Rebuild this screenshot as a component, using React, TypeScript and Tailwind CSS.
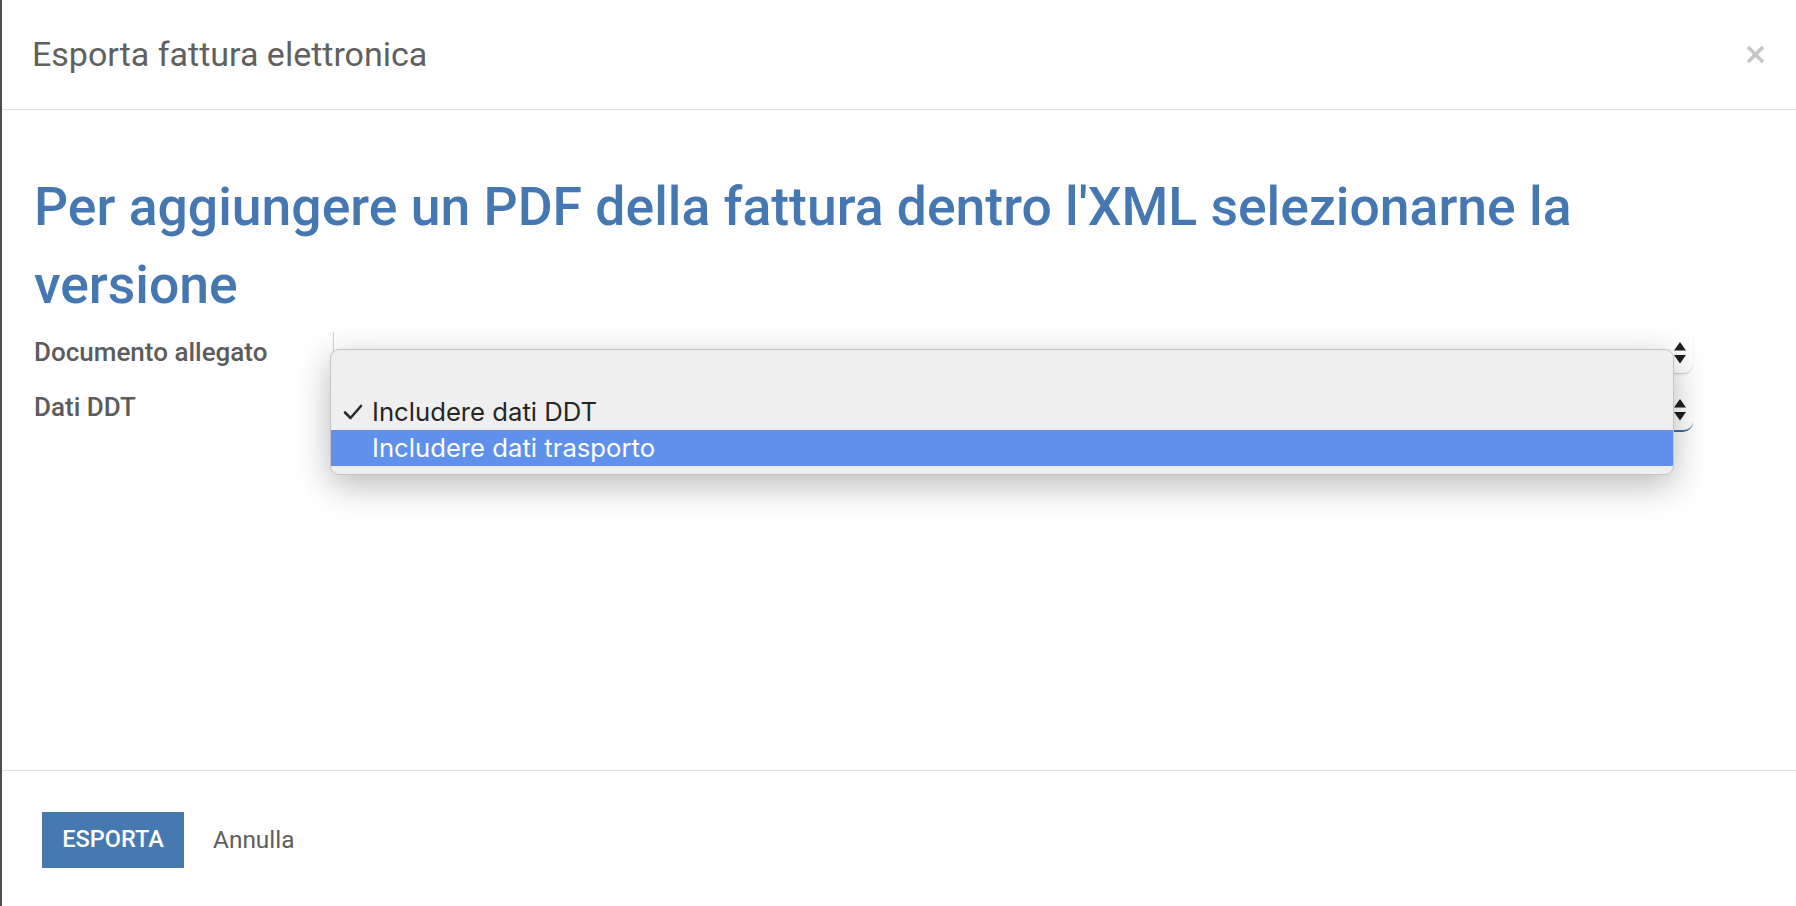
import React from 'react';

const Arrows: React.FC = () => (
  <svg width="16" height="24" viewBox="0 0 16 24" className="shrink-0">
    <path d="M8 1 L14 9.5 L2 9.5 Z" fill="#1f1f1f" />
    <path d="M8 22.5 L14 14 L2 14 Z" fill="#1f1f1f" />
  </svg>
);

export default function App() {
  return (
    <div className="flex h-[906px] w-full bg-white font-['Roboto',sans-serif]">
      {/* page behind the modal */}
      <div className="w-[2px] shrink-0 bg-[#4b4f55]" />

      <div className="flex flex-1 flex-col">
        {/* Header */}
        <div className="flex h-[110px] shrink-0 items-center justify-between border-b border-[#e3e3e3] pl-[30px] pr-[30px]">
          <h4 className="pb-[2px] text-[34px] leading-none text-[#606060]">Esporta fattura elettronica</h4>
          <button aria-label="Close" className="flex h-[22px] w-[22px] items-center justify-center">
            <svg width="19" height="19" viewBox="0 0 19 19">
              <path d="M2 2 L17 17 M17 2 L2 17" stroke="#c6c6c6" strokeWidth="3.6" strokeLinecap="butt" />
            </svg>
          </button>
        </div>

        {/* Body */}
        <div className="relative flex-1 px-[32px] pt-[58px]">
          <h2 className="text-[53.5px] font-medium leading-[78px] text-[#4577b2]">
            Per aggiungere un PDF della fattura dentro l'XML selezionarne la versione
          </h2>

          <div className="mt-[8px] grid grid-cols-[299px_1fr] gap-y-[16px] pr-[71px]">
            <div className="flex h-[42px] items-center pb-[1px] text-[26px] font-medium text-[#5c5c5c]">
              Documento allegato
            </div>
            <div className="flex h-[42px] items-center justify-end rounded-br-[10px] border-b border-l border-[#d2d2d2] pr-[5px] shadow-[0_1px_2px_rgba(0,0,0,0.08)]">
              <Arrows />
            </div>

            <div className="flex h-[42px] items-center pb-[7px] text-[26px] font-medium text-[#5c5c5c]">
              Dati DDT
            </div>
            <div className="flex h-[42px] items-center justify-end rounded-br-[10px] border-b-2 border-[#3f6fa8] pr-[5px]">
              <Arrows />
            </div>
          </div>

          {/* Native select popup menu */}
          <div className="absolute left-[328px] top-[239px] w-[1344px] overflow-hidden rounded-[9px] border border-[#c4c4c4] bg-[#efefef] py-[8px] font-['Inter',sans-serif] text-[25.7px] text-[#262626] shadow-[0_10px_34px_rgba(0,0,0,0.28)]">
            <div className="h-[36px]" />
            <div className="flex h-[36px] items-center">
              <span className="flex w-[41px] justify-center pl-[2px]">
                <svg width="20" height="16" viewBox="0 0 20 16">
                  <path d="M2 8.5 L7.5 14 L18 2" fill="none" stroke="#2b2b2b" strokeWidth="2.6" strokeLinecap="round" strokeLinejoin="round" />
                </svg>
              </span>
              <span>Includere dati DDT</span>
            </div>
            <div className="flex h-[36px] items-center bg-[#5f91ec] pl-[41px] text-white">
              Includere dati trasporto
            </div>
          </div>
        </div>

        {/* Footer */}
        <div className="flex h-[136px] shrink-0 items-start gap-[29px] border-t border-[#e3e3e3] pl-[40px] pt-[41px]">
          <button className="flex h-[56px] w-[142px] items-center justify-center bg-[#4779b1] text-[23.5px] font-medium text-white">
            ESPORTA
          </button>
          <button className="flex h-[56px] items-center text-[24.4px] text-[#5e5e5e]">Annulla</button>
        </div>
      </div>
    </div>
  );
}
